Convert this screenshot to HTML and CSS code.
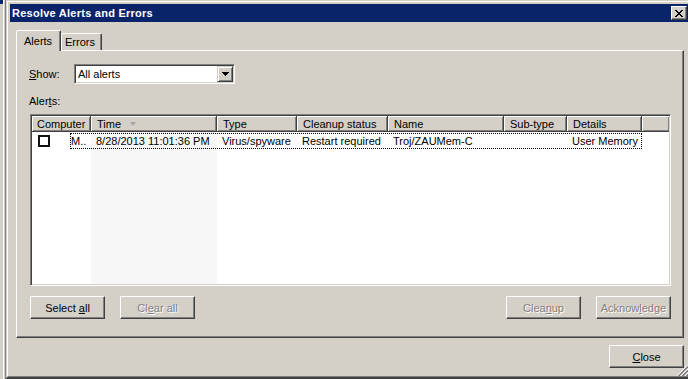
FILE: index.html
```html
<!DOCTYPE html>
<html lang="en">
<head>
    <meta charset="UTF-8">
    <title>Resolve Alerts and Errors</title>
    <link rel="stylesheet" href="styles.css">
</head>
<body>
    <div class="screen">
        <div class="edge"></div>
        <div class="window">
            <div class="frame">
                <div class="titlebar">
                    <span class="title">Resolve Alerts and Errors</span>
                    <span class="tb-close">
                        <svg width="8" height="7" viewBox="0 0 8 7" shape-rendering="crispEdges">
                            <path fill="#000" d="M0 0h2v1h-2zM6 0h2v1h-2zM1 1h2v1h-2zM5 1h2v1h-2zM2 2h4v1h-4zM3 3h2v1h-2zM2 4h4v1h-4zM1 5h2v1h-2zM5 5h2v1h-2zM0 6h2v1h-2zM6 6h2v1h-2z"/>
                        </svg>
                    </span>
                </div>

                <div class="content">
                    <!-- tabs -->
                    <div class="tabs">
                        <div class="tab active">Alerts</div>
                        <div class="tab">Errors</div>
                    </div>

                    <div class="panel">
                        <div class="show-row">
                            <span class="label"><u>S</u>how:</span>
                            <div class="combo">
                                <span class="combo-text">All alerts</span>
                                <span class="combo-btn">
                                    <svg width="7" height="4" viewBox="0 0 7 4" shape-rendering="crispEdges">
                                        <path fill="#000" d="M0 0h7v1h-7zM1 1h5v1h-5zM2 2h3v1h-3zM3 3h1v1h-1z"/>
                                    </svg>
                                </span>
                            </div>
                        </div>

                        <div class="list-label">Aler<u>t</u>s:</div>

                        <!-- alerts list -->
                        <div class="listview">
                            <div class="lv-head">
                                <div class="th">Computer</div>
                                <div class="th">Time<i class="sort"></i></div>
                                <div class="th">Type</div>
                                <div class="th">Cleanup status</div>
                                <div class="th">Name</div>
                                <div class="th">Sub-type</div>
                                <div class="th">Details</div>
                                <div class="th filler"></div>
                            </div>
                            <div class="lv-body">
                                <div class="lv-row">
                                    <div class="chk-cell"><span class="chk"></span></div>
                                    <div class="focus">
                                        <span class="td">M..</span>
                                        <span class="td">8/28/2013 11:01:36 PM</span>
                                        <span class="td">Virus/spyware</span>
                                        <span class="td">Restart required</span>
                                        <span class="td">Troj/ZAUMem-C</span>
                                        <span class="td"></span>
                                        <span class="td">User Memory</span>
                                    </div>
                                </div>
                            </div>
                        </div>

                        <div class="btn-row">
                            <button class="btn">Select <u>a</u>ll</button>
                            <button class="btn" disabled>Cl<u>e</u>ar all</button>
                            <span class="spacer"></span>
                            <button class="btn" disabled>Clea<u>n</u>up</button>
                            <button class="btn" disabled>Acknow<u>l</u>edge</button>
                        </div>
                    </div>

                    <div class="footer">
                        <button class="btn"><u>C</u>lose</button>
                    </div>
                </div>
            </div>

            <div class="grip">
                <svg width="12" height="12" viewBox="0 0 12 12" shape-rendering="crispEdges">
                    <path stroke="#fff" d="M11.5 0.5L0.5 11.5M11.5 4.5L4.5 11.5M11.5 8.5L8.5 11.5"/>
                    <path stroke="#808080" d="M11.5 1.5L1.5 11.5M11.5 2.5L2.5 11.5M11.5 5.5L5.5 11.5M11.5 6.5L6.5 11.5M11.5 9.5L9.5 11.5M11.5 10.5L10.5 11.5"/>
                </svg>
            </div>
        </div>
    </div>
</body>
</html>
```

FILE: styles.css
```css
* {
    box-sizing: border-box;
}

html, body {
    margin: 0;
}

body {
    width: 688px;
    height: 379px;
    overflow: hidden;
    background: #d4d0c8;
    font-family: "Liberation Sans", Arial, sans-serif;
    font-size: 11px;
    color: #000;
}

.screen {
    display: flex;
    height: 379px;
}

/* edge of the window behind */
.edge {
    width: 6px;
    flex: none;
    background:
        linear-gradient(#0a246a, #0a246a) 0 0 / 3px 4px no-repeat,
        linear-gradient(to right, #d4d0c8 3px, #fff 3px 4px, #d4d0c8 4px 5px, #808080 5px);
}

.window {
    flex: 1;
    position: relative;
    display: flex;
    border-top: 1px solid #d4d0c8;
    border-left: 1px solid #d4d0c8;
    border-bottom: 2px solid #404040;
}

.frame {
    flex: 1;
    display: flex;
    flex-direction: column;
    border-top: 1px solid #fff;
    border-left: 1px solid #fff;
    border-bottom: 1px solid #808080;
    padding: 2px 0 0 2px;
}

.titlebar {
    height: 18px;
    flex: none;
    background: #0a246a;
    display: flex;
    align-items: center;
    justify-content: space-between;
    padding: 0 1px 0 2px;
}

.title {
    color: #fff;
    font-weight: bold;
    letter-spacing: 0.25px;
}

.tb-close {
    width: 16px;
    height: 14px;
    background: #d4d0c8;
    border: 1px solid;
    border-color: #fff #404040 #404040 #fff;
    box-shadow: inset -1px -1px #808080;
    display: flex;
    align-items: center;
    justify-content: center;
}

.content {
    padding: 8px 4px 0 6px;
}

/* tabs */
.tabs {
    display: flex;
    align-items: flex-end;
    height: 20px;
}

.tab {
    width: 41px;
    height: 17px;
    padding-left: 3px;
    border: 1px solid;
    border-bottom: 0;
    border-color: #fff #404040 transparent #fff;
    box-shadow: inset -1px 0 #808080;
    border-radius: 2px 2px 0 0;
    display: flex;
    align-items: center;
}

.tab.active {
    width: 45px;
    height: 21px;
    margin-bottom: -1px;
    padding-left: 7px;
    position: relative;
    z-index: 1;
    background: #d4d0c8;
}

.panel {
    height: 288px;
    border: 1px solid;
    border-color: #fff #404040 #404040 #fff;
    box-shadow: inset -1px -1px #808080;
    padding: 13px 12px 0 12px;
}

.show-row {
    display: flex;
    align-items: center;
}

.label {
    width: 45px;
}

.combo {
    width: 161px;
    height: 20px;
    background: #fff;
    border: 1px solid;
    border-color: #808080 #fff #fff #808080;
    box-shadow: inset 1px 1px #404040, inset -1px -1px #d4d0c8;
    padding: 1px;
    display: flex;
    align-items: center;
}

.combo-text {
    flex: 1;
    padding-left: 2px;
}

.combo-btn {
    width: 16px;
    height: 16px;
    background: #d4d0c8;
    border: 1px solid;
    border-color: #d4d0c8 #404040 #404040 #d4d0c8;
    box-shadow: inset 1px 1px #fff, inset -1px -1px #808080;
    display: flex;
    align-items: center;
    justify-content: center;
}

.list-label {
    margin-top: 11px;
    height: 13px;
    line-height: 13px;
}

/* list view */
.listview {
    margin: 6px 0 0 1px;
    width: 641px;
    height: 172px;
    background: #fff;
    border: 1px solid;
    border-color: #808080 #fff #fff #808080;
    box-shadow: inset 1px 1px #404040, inset -1px -1px #d4d0c8;
    padding: 1px;
    display: flex;
    flex-direction: column;
}

.lv-head {
    display: grid;
    grid-template-columns: 59px 126px 80px 91px 116px 63px 75px 1fr;
    height: 16px;
    flex: none;
}

.th {
    background: #d4d0c8;
    border-right: 1px solid #404040;
    border-bottom: 1px solid #404040;
    box-shadow: inset 1px 1px #fff, inset -1px -1px #808080;
    padding-left: 6px;
    display: flex;
    align-items: center;
    white-space: nowrap;
    overflow: hidden;
}

.th:first-child {
    padding-left: 5px;
}

.th.filler {
    border-right: 0;
}

.sort {
    width: 0;
    height: 0;
    border-style: solid;
    border-width: 4px 3px 0;
    border-color: #a6a6a6 transparent transparent;
    margin-left: 9px;
}

.lv-body {
    flex: 1;
    background: linear-gradient(to right, #fff 59px, #f7f7f7 59px 185px, #fff 185px);
}

.lv-row {
    display: flex;
    height: 16px;
    margin-top: 1px;
}

.chk-cell {
    width: 38px;
    padding-left: 6px;
    display: flex;
    align-items: center;
}

.chk {
    width: 12px;
    height: 12px;
    border: 2px solid #111;
    background: #fff;
}

.focus {
    display: grid;
    grid-template-columns: 20px 126px 80px 91px 116px 63px 74px;
    align-items: center;
    border: 1px dotted #000;
}

.td {
    padding-left: 5px;
    white-space: nowrap;
    overflow: hidden;
}

.td:first-child {
    padding-left: 0;
}

/* buttons */
.btn-row {
    display: flex;
    width: 641px;
    margin: 10px 0 0 1px;
}

.spacer {
    flex: 1;
}

.btn {
    width: 75px;
    height: 23px;
    padding: 0;
    font: inherit;
    color: #000;
    background: #d4d0c8;
    border: 1px solid;
    border-color: #fff #404040 #404040 #fff;
    box-shadow: inset -1px -1px #808080;
}

.btn + .btn {
    margin-left: 15px;
}

.btn:disabled {
    color: #808080;
    text-shadow: 1px 1px 0 #fff;
}

.footer {
    display: flex;
    justify-content: flex-end;
    margin-top: 7px;
}

.grip {
    position: absolute;
    right: 0;
    bottom: 0;
    width: 12px;
    height: 12px;
}
```
